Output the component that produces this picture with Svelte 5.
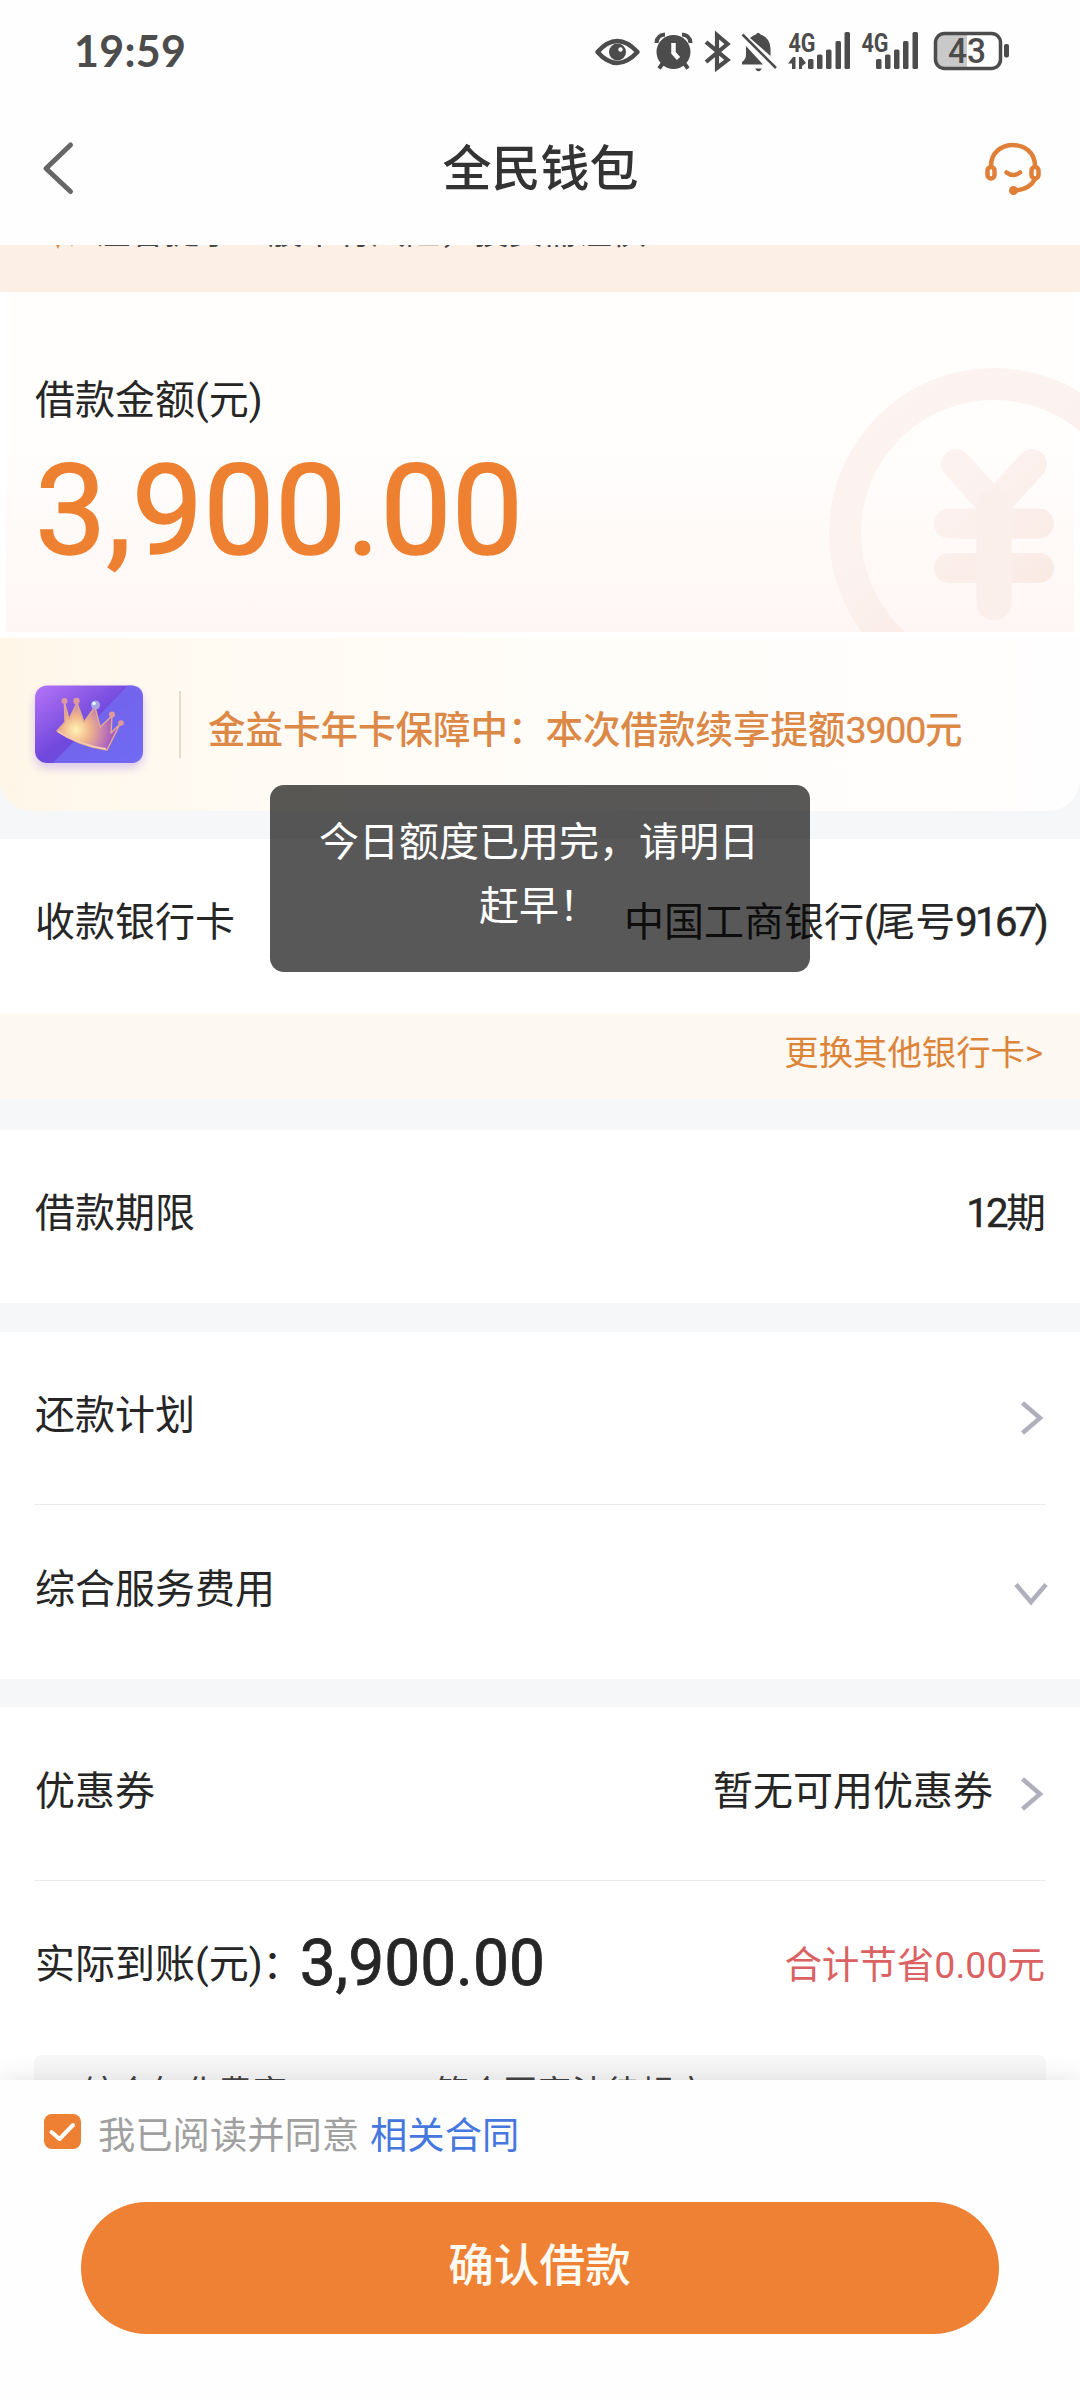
<script>
  let amount = '3,900.00';
  let agreed = true;
  let toast = '今日额度已用完，请明日赶早！';
</script>

<div class="page">
  <div class="status">
    <span class="clock">19:59</span>
    <svg class="status-icons" width="420" height="44" viewBox="592 30 420 44" fill="#4c4c4c">
      <!-- eye -->
      <path d="M597.500 52Q617 30 637.500 52Q617 74 597.500 52Z" fill="none" stroke="#4c4c4c" stroke-width="4.500" stroke-linejoin="round" />
      <circle cx="617.500" cy="52" r="8.500" />
      <circle cx="620.500" cy="49.500" r="2.200" fill="#fff" />
      <!-- alarm -->
      <circle cx="673.500" cy="52" r="17" />
      <path d="M656.500 43Q657 35 665 34.500M682 34.500Q690 35 690.500 43" fill="none" stroke="#4c4c4c" stroke-width="4" />
      <path d="M663 63L659 68.500M684 63L688 68.500" stroke="#4c4c4c" stroke-width="4" />
      <path d="M673.500 43V53L678.500 58.500" fill="none" stroke="#fff" stroke-width="4.500" />
      <!-- bluetooth -->
      <path d="M706 42L727.500 60L717 68V35L727.500 44L706 62" fill="none" stroke="#4c4c4c" stroke-width="4.200" />
      <!-- muted bell -->
      <path d="M746 46L763 64.500H742V62Q746 59 746 55Z" />
      <path d="M750 38Q753 35 756 34.500Q758 31 760.500 34.500Q770.500 38 770.500 49V56Z" />
      <path d="M742.500 34.500L776 68" stroke="#4c4c4c" stroke-width="2.500" />
      <path d="M755 68.500H762Q758.500 74 755 68.500Z" />
      <!-- signal 1 -->
      <text x="788.500" y="51.500" class="net" textLength="27" lengthAdjust="spacingAndGlyphs">4G</text>
      <path d="M788 63.500L793 57H795.500V69H792V63.500ZM799 57H801.500L806 63L802 66V69H799Z" />
      <g>
        <rect x="808" y="59" width="5.500" height="10" rx="1.500" />
        <rect x="817" y="54.500" width="5.500" height="14.500" rx="1.500" />
        <rect x="826" y="49.500" width="5.500" height="19.500" rx="1.500" />
        <rect x="835.500" y="41" width="5.500" height="28" rx="1.500" />
        <rect x="844.500" y="32" width="5.500" height="37" rx="1.500" />
      </g>
      <!-- signal 2 -->
      <text x="861.500" y="51.500" class="net" textLength="27" lengthAdjust="spacingAndGlyphs">4G</text>
      <g>
        <rect x="876" y="59" width="5.500" height="10" rx="1.500" />
        <rect x="885" y="54.500" width="5.500" height="14.500" rx="1.500" />
        <rect x="894" y="49.500" width="5.500" height="19.500" rx="1.500" />
        <rect x="903" y="41" width="5.500" height="28" rx="1.500" />
        <rect x="912.500" y="32" width="5.500" height="37" rx="1.500" />
      </g>
      <!-- battery -->
      <path d="M943 34H967V68H943Q936 68 936 61V41Q936 34 943 34Z" fill="#c9c9c9" />
      <rect x="935.500" y="33.500" width="65" height="35" rx="9" fill="none" stroke="#4c4c4c" stroke-width="3.500" />
      <rect x="1004" y="44" width="5" height="13.500" rx="2" />
      <text x="948" y="63" class="battery" textLength="38" lengthAdjust="spacingAndGlyphs">43</text>
    </svg>
  </div>

  <header class="nav">
    <svg class="back" width="60" height="60" viewBox="0 0 60 60"><path d="M31.500 5L7 28.500L31.500 51.500" /></svg>
    <h1>全民钱包</h1>
    <svg class="service" width="60" height="60" viewBox="0 0 60 60">
      <path d="M9 26C9 -2 53 -2 53 26" />
      <rect x="5.500" y="27" width="7" height="11.500" rx="3.500" />
      <rect x="49.500" y="27" width="7" height="11.500" rx="3.500" />
      <path d="M53 39Q48 49 34 50.500" />
      <path d="M24.500 32.500Q31 37.500 38 32.500" />
      <circle cx="31.500" cy="50.500" r="4.500" class="mic" />
    </svg>
  </header>

  <main>
    <div class="notice">
      <svg width="30" height="30" viewBox="0 0 30 30"><path d="M2 14H16L9 29ZM20 20H25L23 27Z" fill="#d98f4c" /></svg>
      <span>温馨提示：股市有风险，投资需谨慎</span>
    </div>

    <section class="amount">
      <svg class="coin" width="260" height="274" viewBox="820 358 260 274">
        <defs>
          <linearGradient id="coin" gradientUnits="userSpaceOnUse" x1="840" y1="370" x2="1040" y2="630">
            <stop offset="0" stop-color="#fdf5f3" />
            <stop offset=".5" stop-color="#fcf2ef" />
            <stop offset="1" stop-color="#f9e8e1" />
          </linearGradient>
        </defs>
        <g fill="none" stroke="url(#coin)">
          <circle cx="994" cy="533" r="149" stroke-width="32" />
        </g>
        <g fill="none" stroke="#fbefeb" stroke-linecap="round" stroke-linejoin="round">
          <path d="M956 464L994 506L1032 464M949 523.500H1039M949 568H1039" stroke="url(#coin)" stroke-width="30" />
          <path d="M994 506V603" stroke-width="35" />
        </g>
      </svg>
      <div class="label">借款金额(元)</div>
      <div class="value">{amount}</div>
    </section>

    <section class="member">
      <svg width="130" height="104" viewBox="0 0 130 104">
        <defs>
          <linearGradient id="card" x1="0" y1="0" x2="1" y2="1">
            <stop offset="0" stop-color="#b474f6" />
            <stop offset=".5" stop-color="#7048dc" />
            <stop offset="1" stop-color="#6a5cf0" />
          </linearGradient>
          <radialGradient id="crown" gradientUnits="userSpaceOnUse" cx="52" cy="57" r="36">
            <stop offset="0" stop-color="#fff3b4" />
            <stop offset=".4" stop-color="#f0b48c" />
            <stop offset="1" stop-color="#a95cc4" />
          </radialGradient>
        </defs>
        <rect class="card" x="11" y="12.500" width="108" height="77.500" rx="12" fill="url(#card)" />
        <path d="M104 12.500H107Q119 12.500 119 24V78Q119 90 107 90H29Z" fill="#7370f4" opacity=".7" />
        <path d="M40.500 30L45 46L53 30L60 49L71 34L76 54L88 43L87 60L96 51L83 77Q54 73 33 58L41 49Z" fill="url(#crown)" stroke="#e2a890" stroke-width="1.500" stroke-linejoin="round" />
        <path d="M34 58.500Q55 72 82 76" fill="none" stroke="#f3c9b0" stroke-width="2" />
        <g fill="#e0999c">
          <circle cx="40.500" cy="28" r="3" /><circle cx="52.500" cy="28" r="3.200" /><circle cx="88" cy="41.500" r="3" /><circle cx="97" cy="50" r="2.800" />
        </g>
        <circle cx="71.500" cy="32" r="4.500" fill="#a9a4e4" />
        <circle cx="70" cy="30.500" r="1.800" fill="#dff" />
      </svg>
      <i></i>
      <span>金益卡年卡保障中：本次借款续享提额<b>3900</b>元</span>
    </section>

    <section class="group bank">
      <div class="row">
        <span>收款银行卡</span>
        <span class="right">中国工商银行<b>(</b>尾号<b>9167)</b></span>
      </div>
      <div class="change">更换其他银行卡&gt;</div>
    </section>

    <section class="group term">
      <div class="row">
        <span>借款期限</span>
        <span class="right"><b>12</b>期</span>
      </div>
    </section>

    <section class="group">
      <div class="row line">
        <span>还款计划</span>
        <svg class="arrow" width="24" height="34" viewBox="0 0 24 34"><path d="M2.500 2L20 17L2.500 32" /></svg>
      </div>
      <div class="row">
        <span>综合服务费用</span>
        <svg class="arrow down" width="34" height="24" viewBox="0 0 34 24"><path d="M2 2.500L17 20L32 2.500" /></svg>
      </div>
    </section>

    <section class="group">
      <div class="row line">
        <span>优惠券</span>
        <span class="right coupon">暂无可用优惠券</span>
        <svg class="arrow" width="24" height="34" viewBox="0 0 24 34"><path d="M2.500 2L20 17L2.500 32" /></svg>
      </div>
      <div class="row">
        <span class="actual-label">实际到账(元)：</span>
        <span class="actual">{amount}</span>
        <span class="right saved">合计节省0.00元</span>
      </div>
      <div class="tips">
        <span>*</span>
        <span class="rate">综合年化费率</span>
        <span class="law">符合国家法律规定</span>
      </div>
    </section>
  </main>

  <footer>
    <div class="agree">
      <svg width="38" height="36" viewBox="0 0 38 36">
        <rect width="37" height="35" rx="8" fill={agreed ? '#ee8033' : '#ccc'} />
        <path d="M7.500 18L15.500 25L29 11" />
      </svg>
      <span>我已阅读并同意</span>
      <a href="#contract">相关合同</a>
    </div>
    <button>确认借款</button>
  </footer>

  <div class="toast">{toast}</div>
</div>

<style>
  :global(body) {
    margin: 0;
    background: #fff;
  }

  .page {
    position: relative;
    display: flex;
    flex-direction: column;
    width: 1080px;
    height: 2400px;
    overflow: hidden;
    background: #fefefe;
    color: #262626;
    font-family: Roboto, 'Noto Sans CJK SC', sans-serif;
    font-size: 40px;
  }

  .status {
    display: flex;
    align-items: center;
    justify-content: space-between;
    height: 104px;
    padding: 0 68px 0 74px;
    flex-shrink: 0;
    box-sizing: border-box;
  }
  .clock {
    color: #4c4c4c;
    font-family: Lato, sans-serif;
    font-size: 43px;
    font-weight: 700;
    line-height: 50px;
    padding-bottom: 2px;
    letter-spacing: .3px;
  }
  .net {
    font: 700 25px Roboto, sans-serif;
  }
  .battery {
    font: 500 35px Roboto, sans-serif;
  }

  .nav {
    display: flex;
    align-items: center;
    justify-content: space-between;
    height: 141px;
    padding: 0 38px 10px 39px;
    flex-shrink: 0;
    box-sizing: border-box;
  }
  .nav h1 {
    margin: 0;
    font-size: 49px;
    font-weight: 500;
    line-height: 60px;
    color: #333;
  }
  .nav svg {
    fill: none;
    stroke-linecap: round;
    stroke-linejoin: round;
  }
  .back {
    stroke: #666;
    stroke-width: 5;
  }
  .service {
    stroke: #e07f38;
    stroke-width: 4.5;
  }
  .service .mic {
    fill: #e07f38;
    stroke: none;
  }

  main {
    flex: 1;
    min-height: 0;
    overflow: hidden;
    background: #f6f7f9;
  }

  .notice {
    display: flex;
    align-items: flex-start;
    gap: 17px;
    height: 47px;
    padding-left: 49px;
    overflow: hidden;
    background: #fcf0e6;
    font-size: 34.4px;
    line-height: 44px;
    color: #444;
  }
  .notice span {
    margin-top: -35px;
  }
  .notice svg {
    margin-top: -25px;
  }

  .amount {
    position: relative;
    height: 340px;
    padding: 79px 29px 0;
    box-sizing: border-box;
    border: solid #fff;
    border-width: 0 6px;
    background: linear-gradient(#fffefd 0%, #fffefd 45%, #fef6f4 100%);
    box-shadow: 0 6px 0 #fff;
    margin-bottom: 6px;
  }
  .coin {
    position: absolute;
    right: -6px;
    bottom: 0;
  }
  .label {
    line-height: 60px;
  }
  .value {
    position: relative;
    margin-top: 5px;
    font-size: 127px;
    line-height: 150px;
    letter-spacing: .2px;
    color: #ee8131;
    -webkit-text-stroke: 1.5px #ee8131;
  }

  .member {
    display: flex;
    align-items: center;
    height: 173px;
    padding-left: 24px;
    box-sizing: border-box;
    border-radius: 0 0 32px 32px;
    background: linear-gradient(90deg, #fff6e8 0%, #fffaf2 20%, #fffdf9 50%, #fffefe 100%);
    color: #dc8847;
    font-size: 37.5px;
    font-weight: 500;
  }
  .card {
    filter: drop-shadow(0 5px 5px rgba(150, 110, 230, .35));
  }
  .member i {
    width: 2px;
    height: 67px;
    margin: 0 27px 0 25px;
    background: #e8dac6;
  }
  .member span {
    padding-top: 3px;
  }
  .member b {
    font-weight: 400;
    letter-spacing: -1.2px;
    -webkit-text-stroke: .4px #dc8847;
  }

  .group {
    margin-top: 28.5px;
    background: #fff;
  }
  .group.bank {
    margin-top: 28px;
  }
  .group.term {
    margin-top: 31px;
  }
  .row {
    position: relative;
    display: flex;
    align-items: center;
    height: 173.6px;
    padding: 0 33px 13px 35px;
    box-sizing: border-box;
  }
  .bank .row {
    padding-bottom: 14px;
  }
  .line::after {
    content: '';
    position: absolute;
    left: 34px;
    right: 34px;
    bottom: 0;
    height: 1px;
    background: #ebebeb;
  }
  .right {
    margin-left: auto;
    padding-right: 1px;
  }
  .right b {
    font-weight: 400;
    letter-spacing: -2.6px;
    -webkit-text-stroke: .5px #262626;
  }
  .arrow {
    margin: 12px 3px 0 auto;
    fill: none;
    stroke: #b0b0bd;
    stroke-width: 4.5;
  }
  .arrow.down {
    margin: 16px -1px 0 auto;
  }
  .coupon + .arrow {
    margin-left: 26px;
  }
  .change {
    height: 86px;
    padding-right: 37px;
    background: #fef8f2;
    color: #dc8438;
    font-size: 34.4px;
    line-height: 81px;
    text-align: right;
  }
  .actual-label {
    margin-right: -3px;
  }
  .actual {
    margin-top: 5px;
    font-size: 64px;
    -webkit-text-stroke: .8px #262626;
  }
  .saved {
    padding-right: 2px;
    color: #da6262;
    font-size: 37.5px;
  }
  .tips {
    display: flex;
    margin: 0 34px;
    height: 80px;
    padding: 13px 22px;
    border-radius: 8px;
    background: #f7f7f8;
    font-size: 34.2px;
    line-height: 50px;
    color: #444;
  }
  .rate {
    margin-left: 11px;
  }
  .law {
    margin-left: 148px;
  }

  footer {
    position: relative;
    display: flex;
    flex-direction: column;
    align-items: center;
    height: 320px;
    flex-shrink: 0;
    background: #fefefe;
    box-shadow: 0 -2px 24px rgba(0, 0, 0, .1);
  }
  .agree {
    display: flex;
    align-items: center;
    align-self: stretch;
    height: 106px;
    padding-left: 44px;
    font-size: 37.3px;
    color: #a0a0a0;
  }
  .agree svg {
    margin: -3px 16px 0 0;
  }
  .agree path {
    fill: none;
    stroke: #fff;
    stroke-width: 4;
    stroke-linecap: round;
    stroke-linejoin: round;
  }
  .agree a {
    margin-left: 11px;
    color: #4577de;
    text-decoration: none;
  }
  button {
    width: 918px;
    height: 132px;
    margin-top: 16px;
    padding: 0 1px 13px 0;
    border: 0;
    border-radius: 66px;
    background: #ee8133;
    color: #fffaf2;
    font-family: inherit;
    font-size: 45.7px;
    font-weight: 500;
  }

  /* covers the rows underneath, so it sits outside the flow */
  .toast {
    position: absolute;
    top: 785px;
    left: 270px;
    width: 540px;
    height: 187px;
    padding: 26px 49px 0 47px;
    box-sizing: border-box;
    border-radius: 14px;
    background: rgba(0, 0, 0, .655);
    color: #fff;
    line-height: 64px;
    text-align: center;
  }
</style>
